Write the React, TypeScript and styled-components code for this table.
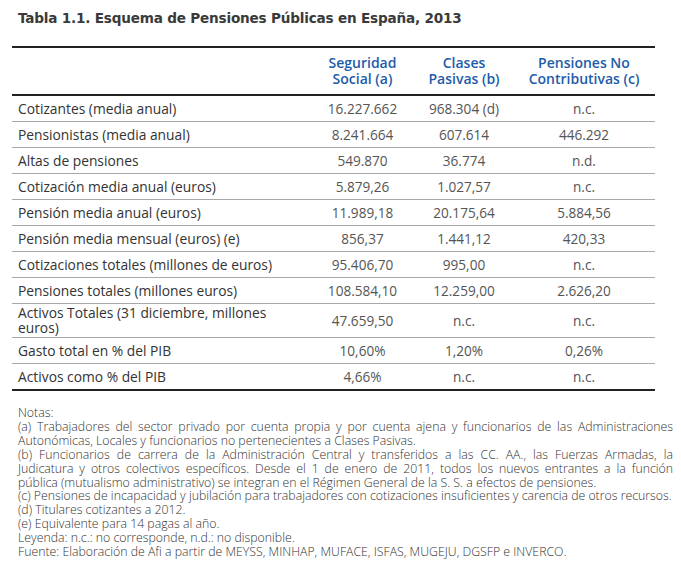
import React from "react";
import styled, { createGlobalStyle } from "styled-components";

const Global = createGlobalStyle`
  html, body { margin: 0; padding: 0; background: #fff; }
  body { font-family: "Open Sans", "Liberation Sans", sans-serif; color: #333; }
`;

const Page = styled.div`
  width: 681px;
  height: 576px;
  padding: 8px 8px 0 12px;
  box-sizing: border-box;
  display: flex;
  flex-direction: column;
`;

const Title = styled.h1`
  margin: 0 0 0 6px;
  font-family: "DejaVu Sans", "Open Sans", sans-serif;
  font-weight: 700;
  font-size: 13.6px;
  line-height: 20px;
  color: #3a3a3a;
  letter-spacing: -0.2px;
`;

const Table = styled.table`
  margin-top: 18px;
  width: 643px;
  border-collapse: collapse;
  table-layout: fixed;
  border-top: 2px solid #222;
  border-bottom: 2px solid #222;
`;

const HeadCell = styled.th<{ $w: number }>`
  width: ${(p) => p.$w}px;
  padding: 7px 0 7px;
  font-weight: 600;
  font-size: 14px;
  line-height: 16px;
  color: #1d5ca8;
  text-align: center;
  border-bottom: 2px solid #222;
`;

const Row = styled.tr<{ $last?: boolean }>`
  border-bottom: ${(p) => (p.$last ? "none" : "1px solid #a8a8a8")};
`;

const Label = styled.td<{ $tall?: boolean }>`
  padding: ${(p) => (p.$tall ? "1px 20px 2px 6px" : "0 6px")};
  height: ${(p) => (p.$tall ? 30 : 25)}px;
  font-size: 13.8px;
  line-height: 15px;
  color: #333;
  text-align: left;
`;

const Value = styled.td`
  padding: 0;
  font-size: 13.6px;
  line-height: 15px;
  font-weight: 400;
  color: #555;
  text-align: center;
`;

const Notes = styled.div`
  margin: 15px 0 0 6px;
  width: 655px;
  font-size: 12.3px;
  line-height: 13.9px;
  font-weight: 300;
  color: #333;
`;

const NoteLine = styled.div<{ $fill?: boolean }>`
  white-space: nowrap;
  text-align: ${(p) => (p.$fill ? "justify" : "left")};
  text-align-last: ${(p) => (p.$fill ? "justify" : "left")};
`;

const rows: [string, string, string, string][] = [
  ["Cotizantes (media anual)", "16.227.662", "968.304 (d)", "n.c."],
  ["Pensionistas (media anual)", "8.241.664", "607.614", "446.292"],
  ["Altas de pensiones", "549.870", "36.774", "n.d."],
  ["Cotización media anual (euros)", "5.879,26", "1.027,57", "n.c."],
  ["Pensión media anual (euros)", "11.989,18", "20.175,64", "5.884,56"],
  ["Pensión media mensual (euros) (e)", "856,37", "1.441,12", "420,33"],
  ["Cotizaciones totales (millones de euros)", "95.406,70", "995,00", "n.c."],
  ["Pensiones totales (millones euros)", "108.584,10", "12.259,00", "2.626,20"],
  ["Activos Totales (31 diciembre, millones euros)", "47.659,50", "n.c.", "n.c."],
  ["Gasto total en % del PIB", "10,60%", "1,20%", "0,26%"],
  ["Activos como % del PIB", "4,66%", "n.c.", "n.c."],
];

const notes: [string, boolean][] = [
  ["Notas:", false],
  ["(a) Trabajadores del sector privado por cuenta propia y por cuenta ajena y funcionarios de las Administraciones", true],
  ["Autonómicas, Locales y funcionarios no pertenecientes a Clases Pasivas.", false],
  ["(b) Funcionarios de carrera de la Administración Central y transferidos a las CC. AA., las Fuerzas Armadas, la", true],
  ["Judicatura y otros colectivos específicos. Desde el 1 de enero de 2011, todos los nuevos entrantes a la función", true],
  ["pública (mutualismo administrativo) se integran en el Régimen General de la S. S. a efectos de pensiones.", false],
  ["(c) Pensiones de incapacidad y jubilación para trabajadores con cotizaciones insuficientes y carencia de otros recursos.", false],
  ["(d) Titulares cotizantes a 2012.", false],
  ["(e) Equivalente para 14 pagas al año.", false],
  ["Leyenda: n.c.: no corresponde, n.d.: no disponible.", false],
  ["Fuente: Elaboración de Afi a partir de MEYSS, MINHAP, MUFACE, ISFAS, MUGEJU, DGSFP e INVERCO.", false],
];

export default function App() {
  return (
    <>
      <Global />
      <Page>
        <Title>Tabla 1.1. Esquema de Pensiones Públicas en España, 2013</Title>
        <Table>
          <thead>
            <tr>
              <HeadCell $w={298} />
              <HeadCell $w={105}>
                Seguridad
                <br />
                Social (a)
              </HeadCell>
              <HeadCell $w={98}>
                Clases
                <br />
                Pasivas (b)
              </HeadCell>
              <HeadCell $w={142}>
                Pensiones No
                <br />
                Contributivas (c)
              </HeadCell>
            </tr>
          </thead>
          <tbody>
            {rows.map((r, i) => (
              <Row key={r[0]} $last={i === rows.length - 1}>
                <Label $tall={i === 8}>{r[0]}</Label>
                <Value>{r[1]}</Value>
                <Value>{r[2]}</Value>
                <Value>{r[3]}</Value>
              </Row>
            ))}
          </tbody>
        </Table>
        <Notes>
          {notes.map(([t, fill]) => (
            <NoteLine key={t} $fill={fill}>
              {t}
            </NoteLine>
          ))}
        </Notes>
      </Page>
    </>
  );
}
